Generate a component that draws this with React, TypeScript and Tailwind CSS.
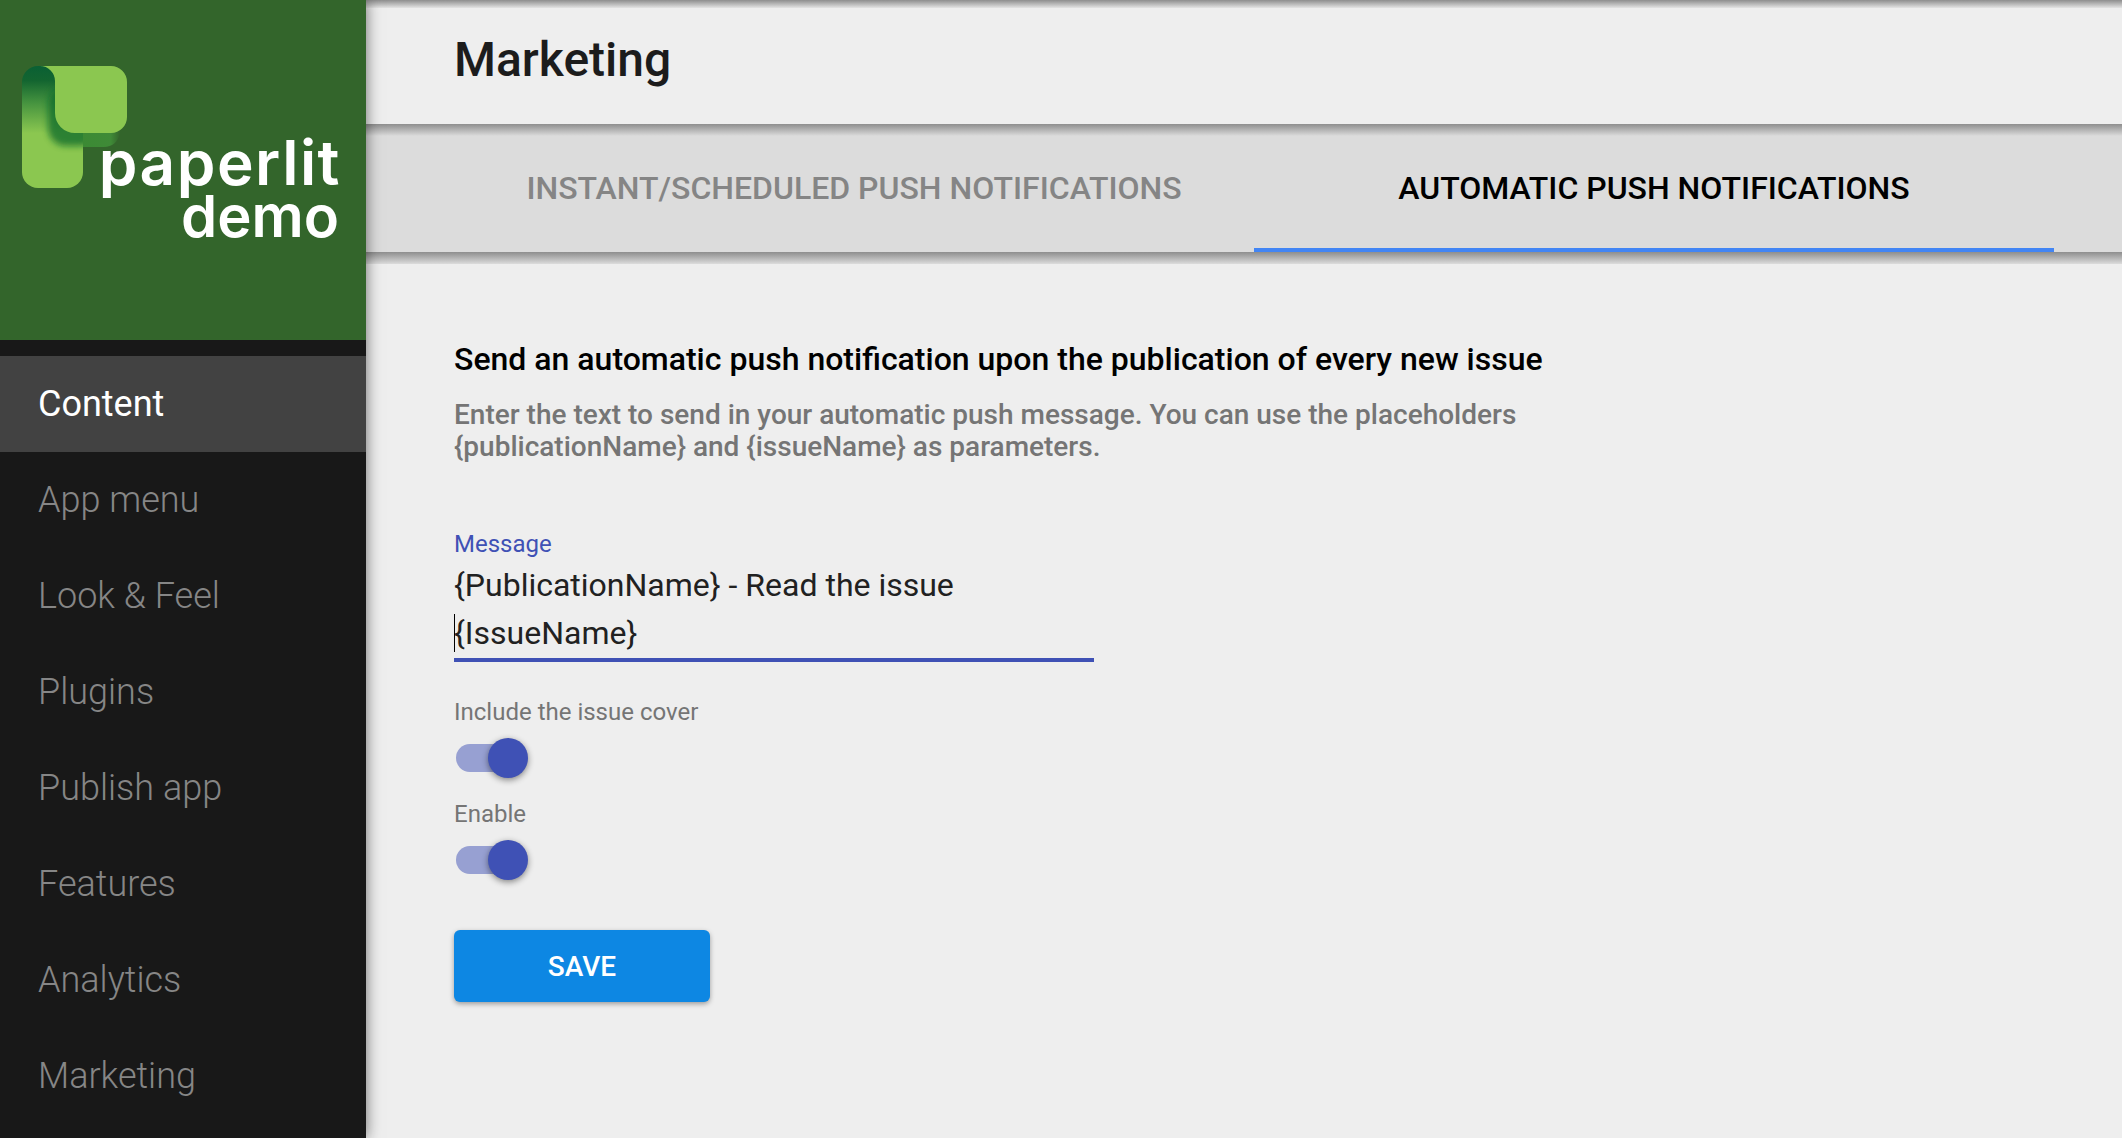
const menu = ["Content", "App menu", "Look & Feel", "Plugins", "Publish app", "Features", "Analytics", "Marketing"];

function Logo() {
  return (
    <svg width="110" height="126" viewBox="0 0 110 126" className="block">
      <defs>
        <linearGradient id="fold" x1="0" y1="0" x2="0" y2="1">
          <stop offset="0" stopColor="#0a6034" />
          <stop offset="0.12" stopColor="#136530" />
          <stop offset="0.3" stopColor="#45933f" />
          <stop offset="0.55" stopColor="#8bc750" />
          <stop offset="1" stopColor="#8bc750" />
        </linearGradient>
        <linearGradient id="under" x1="0" y1="0" x2="1" y2="0">
          <stop offset="0" stopColor="#3b8a34" />
          <stop offset="0.75" stopColor="#3f8a37" />
          <stop offset="1" stopColor="#3f8a37" stopOpacity="0" />
        </linearGradient>
        <clipPath id="left">
          <rect width="61" height="122" rx="16" />
        </clipPath>
        <filter id="soft" x="-30%" y="-30%" width="160%" height="160%">
          <feGaussianBlur stdDeviation="3" />
        </filter>
      </defs>
      <rect width="61" height="122" rx="16" fill="url(#fold)" />
      <g clipPath="url(#left)">
        <rect x="26" y="20" width="50" height="60" rx="18" fill="#0f6a2c" opacity="0.75" filter="url(#soft)" />
      </g>
      <path d="M61 60H98V67C96 76 90 81 82 81H61Z" fill="url(#under)" />
      <path d="M18 0H89A16 16 0 0 1 105 16V51A16 16 0 0 1 89 67H53A20 20 0 0 1 33 47V15A15 15 0 0 0 18 0Z" fill="#8bc750" />
    </svg>
  );
}

function Toggle() {
  return (
    <div className="relative mt-3 flex h-10 w-[74px] items-center">
      <div className="ml-[2px] h-7 w-[68px] rounded-full bg-[#3f51b5]/50" />
      <div className="absolute left-[34px] top-0 h-10 w-10 rounded-full bg-[#3f51b5] shadow-[0_2px_6px_rgba(0,0,0,0.45)]" />
    </div>
  );
}

function ShadowBand() {
  return <div className="h-3 bg-gradient-to-b from-[#8e8e8e] to-[#dcdcdc]" />;
}

export default function App() {
  return (
    <div className="flex h-[1138px] w-[2122px] overflow-hidden bg-[#eeeeee] font-['Roboto',sans-serif]">
      <aside className="relative z-10 h-full w-[366px] shrink-0 bg-[#181818] shadow-[0_0_14px_rgba(0,0,0,0.55)]">
        <div className="relative h-[340px] bg-[#33652b] pl-[22px] pt-[66px]">
          <Logo />
          <div className="absolute right-[25px] top-[137px] text-right font-['Inter',sans-serif] font-semibold text-white">
            <div className="text-[62px] leading-[52px] tracking-[1.5px]">paperlit</div>
            <div className="mr-[2px] text-[58px] leading-[54px]">demo</div>
          </div>
        </div>
        <nav className="pt-4">
          {menu.map((item, i) => (
            <div
              key={item}
              className={
                i === 0
                  ? "flex h-24 items-center bg-[#424242] pl-[38px] text-[36px] text-white"
                  : "flex h-24 items-center pl-[38px] text-[36px] font-light text-[#868686]"
              }
            >
              {item}
            </div>
          ))}
        </nav>
      </aside>

      <main className="flex min-w-0 flex-1 flex-col">
        <div className="h-2 bg-gradient-to-b from-[#8e8e8e] to-[#e4e4e4]" />
        <header className="flex h-[116px] items-center bg-[#eeeeee] pb-3 pl-[88px] text-[48px] font-medium text-[#1c1c1c]">
          Marketing
        </header>
        <ShadowBand />
        <div className="flex h-[116px] bg-[#dcdcdc] pl-[88px] pr-[68px]">
          <div className="flex w-[800px] items-center justify-center pb-3 text-[32px] font-medium text-[#858585]">
            INSTANT/SCHEDULED PUSH NOTIFICATIONS
          </div>
          <div className="flex w-[800px] items-center justify-center border-b-4 border-[#4285f4] pb-2 text-[32px] font-medium text-black">
            AUTOMATIC PUSH NOTIFICATIONS
          </div>
        </div>
        <ShadowBand />
        <section className="flex-1 bg-[#eeeeee] pl-[88px] pt-[77px]">
          <h2 className="text-[32px] font-medium leading-9 text-black">
            Send an automatic push notification upon the publication of every new issue
          </h2>
          <p className="mt-[22px] w-[1100px] text-[28px] font-medium leading-8 text-[#757575]">
            Enter the text to send in your automatic push message. You can use the placeholders
            <br />
            {"{publicationName} and {issueName} as parameters."}
          </p>

          <label className="mt-[67px] block text-[24px] leading-7 text-[#3f51b5]">Message</label>
          <div className="relative mt-[3px] w-[640px] border-b-4 border-[#3f51b5] pb-px text-[32px] leading-[48px] text-[#212121]">
            <div>{"{PublicationName} - Read the issue"}</div>
            <div>{"{IssueName}"}</div>
            <span className="absolute bottom-[6px] left-0 h-[38px] w-px bg-black" />
          </div>

          <div className="mt-[36px] text-[24px] leading-7 text-[#757575]">Include the issue cover</div>
          <Toggle />
          <div className="mt-[22px] text-[24px] leading-7 text-[#757575]">Enable</div>
          <Toggle />

          <button
            type="button"
            className="mt-[50px] flex h-[72px] w-[256px] items-center justify-center rounded-md bg-[#0d87e3] pt-px text-[28px] font-medium text-white shadow-[0_2px_5px_rgba(0,0,0,0.35)]"
          >
            SAVE
          </button>
        </section>
      </main>
    </div>
  );
}
